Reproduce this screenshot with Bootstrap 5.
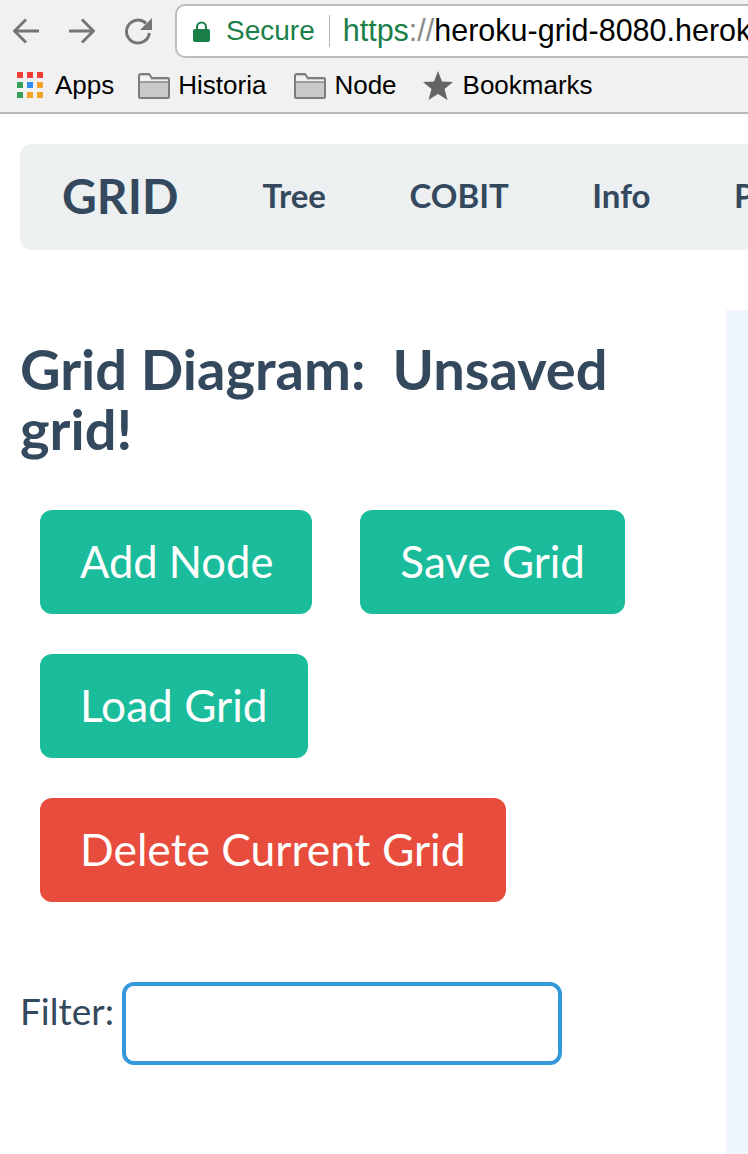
<!DOCTYPE html>
<html lang="en">
<head>
  <meta charset="UTF-8" />
  <meta name="viewport" content="width=device-width, initial-scale=1.0" />
  <title>GRID</title>
  <link href="https://cdn.jsdelivr.net/npm/bootstrap@5.3.3/dist/css/bootstrap.min.css" rel="stylesheet">
  <style>
    html, body { height: 1154px; overflow: hidden; }
    body { font-family: Lato, sans-serif; color: #34495e; background: #fff; width: 748px; }

    /* browser chrome */
    .chrome { height: 114px; background: #f1f1f1; border-bottom: 2px solid #b8b8b8; font-family: "Liberation Sans", sans-serif; overflow: hidden; }
    .tool-row { height: 59px; padding: 3px 0 0 13px; }
    .tool-row svg { flex: none; }
    .tool-gap { margin-left: 30px; }
    .omnibox { width: 640px; height: 54px; flex: none; margin-left: 23px; background: #fff; border: 2px solid #bdbdbd; border-radius: 10px; padding-left: 16px; font-size: 28px; white-space: nowrap; }
    .secure-label { color: #1b7f48; margin-left: 16px; padding-right: 14px; border-right: 1px solid #b5b5b5; line-height: 32px; }
    .url-text { margin-left: 13px; color: #000; font-size: 30.5px; }
    .url-scheme { color: #1b7f48; }
    .url-slash { color: #8a8a8a; }
    .bm-row { height: 53px; padding-left: 17px; font-size: 26px; color: #000; white-space: nowrap; }
    .bm-item { gap: 8px; margin-right: 26px; }
    .bm-apps { gap: 11px; margin-right: 24px; }
    .bm-hist { margin-right: 28px; }
    .bm-star { gap: 10px; }

    /* page navbar */
    .grid-nav { width: 900px; height: 106px; margin: 30px 0 0 20px; background: #ecf0f1; border-radius: 12px; padding-left: 42px; }
    .grid-brand { font-size: 48px; font-weight: 700; color: #34495e; text-decoration: none; margin-right: 84px; margin-top: -3px; }
    .grid-link { font-size: 33px; font-weight: 700; color: #34495e; text-decoration: none; margin-right: 83.5px; margin-top: -2px; }

    /* main */
    .page-body { height: 904px; }
    .left-col { width: 726px; flex: none; padding: 89px 20px 0 20px; }
    .side-panel { width: 22px; flex: none; height: 844px; margin-top: 60px; background: #eff6fd; }
    .page-title { font-size: 56px; font-weight: 700; line-height: 60px; color: #34495e; margin: 0 0 51px; }
    .btn-big { font-family: Lato, sans-serif; font-size: 44px; line-height: 52px; height: 104px; padding: 25px 40px 27px; border: 0; border-radius: 12px; color: #fff; margin: 0 48px 40px 20px; }
    .btn-big:hover { color: #fff; }
    .btn-teal { background: #1abc9c; }
    .btn-tomato { background: #e74c3c; font-size: 44.4px; }
    .btn-add { font-size: 43.5px; padding-right: 39px; }
    .btn-next { margin-left: 0; }
    .btn-load { font-size: 44.2px; }
    .filter-row { margin-top: 40px; gap: 8px; }
    .filter-label { font-size: 37px; line-height: 58px; }
    .filter-input { width: 440px; height: 83px; border: 4px solid #3498db; border-radius: 12px; outline: 0; background: #fff; }
  </style>
</head>
<body>

<!-- Browser toolbar -->
<div class="chrome">
  <div class="tool-row d-flex align-items-center">
    <svg width="26" height="26" viewBox="0 0 26 26" fill="none" stroke="#757575" stroke-width="3"><path d="M1 13H26M13 1.500L1.500 13L13 24.500"/></svg>
    <svg class="tool-gap" width="26" height="26" viewBox="0 0 26 26" fill="none" stroke="#757575" stroke-width="3"><path d="M0 13H25M13 1.500L24.500 13L13 24.500"/></svg>
    <svg class="tool-gap" width="27" height="27" viewBox="0 0 27 27"><path d="M21 5.300A11.500 11.500 0 1 0 24.400 15" fill="none" stroke="#757575" stroke-width="3"/><path d="M27 0V12H15Z" fill="#757575"/></svg>
    <div class="omnibox d-flex align-items-center">
      <svg width="17" height="21" viewBox="0 0 17 21"><path d="M4 9V6a4.500 4.500 0 0 1 9 0V9" fill="none" stroke="#1b7f48" stroke-width="2"/><rect y="8" width="17" height="13" rx="2" fill="#1b7f48"/></svg>
      <span class="secure-label">Secure</span>
      <span class="url-text"><span class="url-scheme">https</span><span class="url-slash">://</span>heroku-grid-8080.herok</span>
    </div>
  </div>
  <div class="bm-row d-flex align-items-center">
    <div class="bm-item bm-apps d-flex align-items-center">
      <svg width="27" height="27" viewBox="0 0 27 27">
        <g fill="#ef3e36"><rect width="6" height="6"/><rect x="10" width="6" height="6"/><rect x="20" width="6" height="6"/></g>
        <rect y="10" width="6" height="6" fill="#34a05a"/><rect x="10" y="10" width="6" height="6" fill="#2f8df0"/><rect x="20" y="10" width="6" height="6" fill="#f4a328"/>
        <rect y="20" width="6" height="6" fill="#34a05a"/><rect x="10" y="20" width="6" height="6" fill="#f4a328"/><rect x="20" y="20" width="6" height="6" fill="#f4a328"/>
      </svg>
      <span>Apps</span>
    </div>
    <div class="bm-item bm-hist d-flex align-items-center">
      <svg width="32" height="26" viewBox="0 0 32 26"><path d="M1 24V3a2 2 0 0 1 2-2H11L14 5H30a1 1 0 0 1 1 1V24a1 1 0 0 1-1 1H2a1 1 0 0 1-1-1Z" fill="#c9c9c9" stroke="#7d7d7d" stroke-width="2"/><path d="M1 9H31" stroke="#8c8c8c" stroke-width="1.500"/><path d="M2 3H11L13 7H30V8H2Z" fill="#f2f2f2"/></svg>
      <span>Historia</span>
    </div>
    <div class="bm-item d-flex align-items-center">
      <svg width="32" height="26" viewBox="0 0 32 26"><path d="M1 24V3a2 2 0 0 1 2-2H11L14 5H30a1 1 0 0 1 1 1V24a1 1 0 0 1-1 1H2a1 1 0 0 1-1-1Z" fill="#c9c9c9" stroke="#7d7d7d" stroke-width="2"/><path d="M1 9H31" stroke="#8c8c8c" stroke-width="1.500"/><path d="M2 3H11L13 7H30V8H2Z" fill="#f2f2f2"/></svg>
      <span>Node</span>
    </div>
    <div class="bm-item bm-star d-flex align-items-center">
      <svg width="30" height="29" viewBox="0 0 30 29"><path d="M15 0L19 10.500L30 11L21.500 18L24.500 29L15 23L5.500 29L8.500 18L0 11L11 10.500Z" fill="#646464"/></svg>
      <span>Bookmarks</span>
    </div>
  </div>
</div>

<!-- Navbar -->
<nav class="grid-nav d-flex align-items-center">
  <a class="grid-brand" href="#">GRID</a>
  <a class="grid-link" href="#">Tree</a>
  <a class="grid-link" href="#">COBIT</a>
  <a class="grid-link" href="#">Info</a>
  <a class="grid-link" href="#">P</a>
</nav>

<!-- Main content -->
<div class="page-body d-flex">
  <div class="left-col">
    <h1 class="page-title">Grid Diagram:&nbsp; Unsaved grid!</h1>
    <div>
      <button class="btn btn-big btn-teal btn-add" type="button">Add Node</button><button class="btn btn-big btn-teal btn-next" type="button">Save Grid</button>
    </div>
    <div><button class="btn btn-big btn-teal btn-load" type="button">Load Grid</button></div>
    <div><button class="btn btn-big btn-tomato" type="button">Delete Current Grid</button></div>
    <div class="filter-row d-flex align-items-start">
      <label class="filter-label" for="filter">Filter:</label>
      <input id="filter" class="filter-input" type="text">
    </div>
  </div>
  <div class="side-panel"></div>
</div>

<script src="https://cdn.jsdelivr.net/npm/bootstrap@5.3.3/dist/js/bootstrap.bundle.min.js"></script>
</body>
</html>
